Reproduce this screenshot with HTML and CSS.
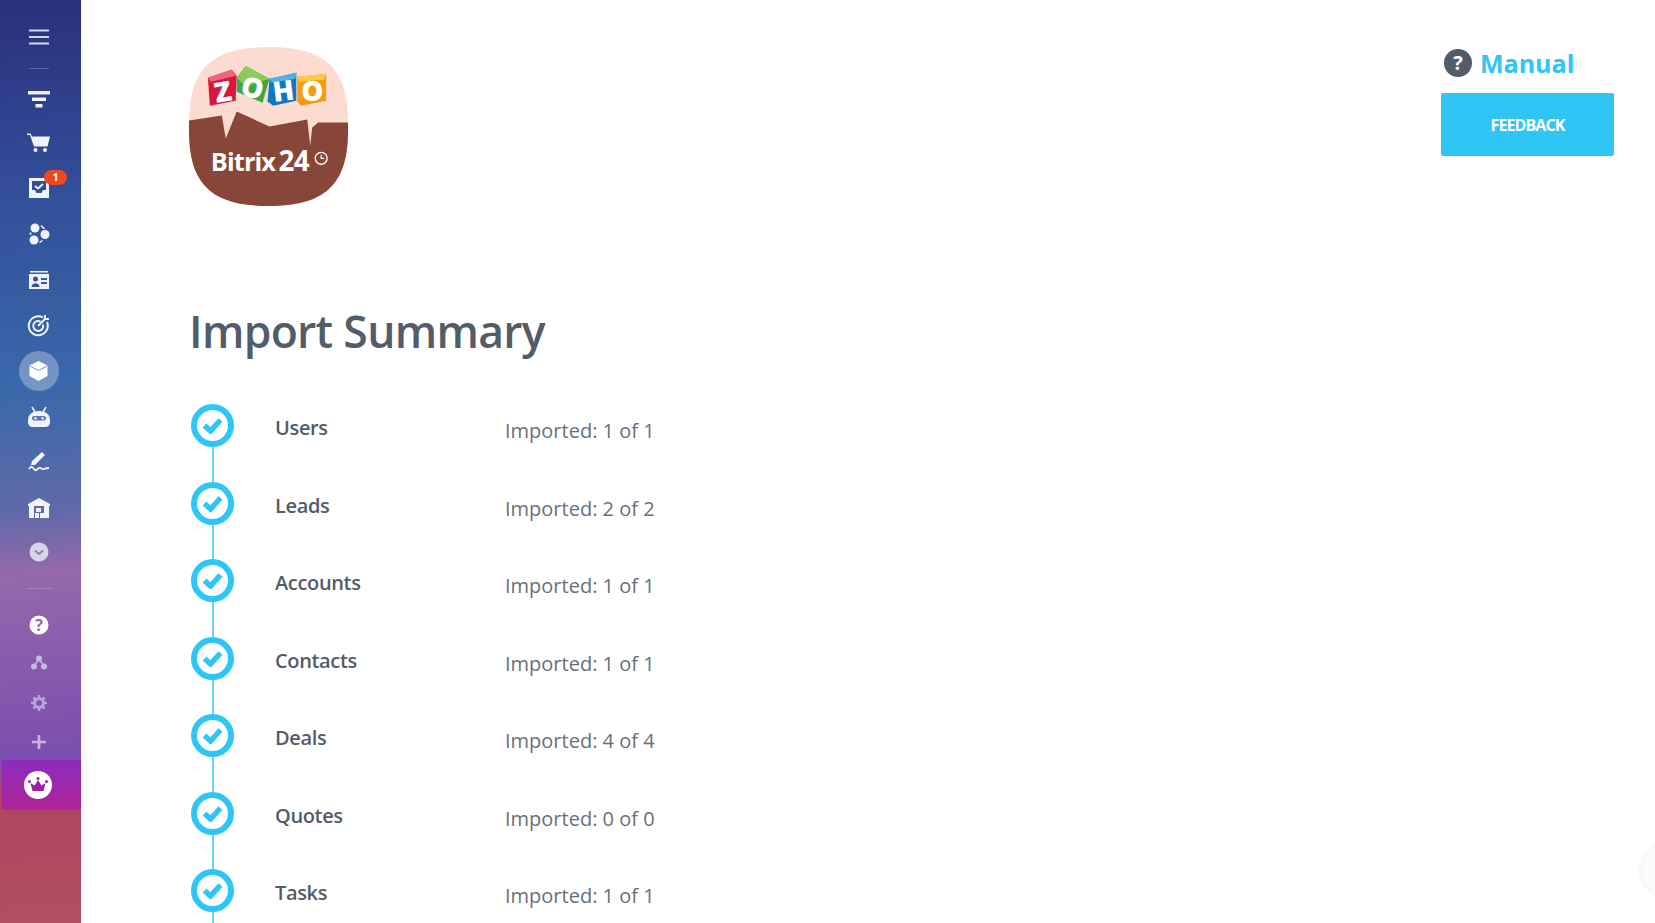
FILE: index.html
```html
<!DOCTYPE html>
<html lang="en">
<head>
<meta charset="utf-8">
<title>Import Summary</title>
<link rel="stylesheet" href="styles.css">
</head>
<body>
<div class="app">
  <nav class="sidebar">
    <div class="nav-top">
      <div class="nav-item menu"><svg width="20" height="16" viewBox="0 0 20 16"><path d="M0 1.500h20M0 8h20M0 14.500h20" stroke="#d5d9ec" stroke-width="2.200"/></svg></div>
      <div class="sep"></div>
      <div class="nav-list">
        <div class="nav-item"><svg width="22" height="18" viewBox="0 0 22 18"><path d="M0 1h22v3.500H0zM4 7.500h14v3.500H4zM7.500 14h7v3.500h-7z" fill="#f1f3fb"/></svg></div>
        <div class="nav-item"><svg width="24" height="20" viewBox="0 1.500 24 20"><path d="M0 1h3.500l1.500 3h18l-2.500 10H7L3 2.500H0z" fill="#f1f3fb"/><circle cx="8.500" cy="17.500" r="2" fill="#f1f3fb"/><circle cx="18" cy="17.500" r="2" fill="#f1f3fb"/></svg></div>
        <div class="nav-item"><svg width="20" height="20" viewBox="0 2 20 20"><path fill-rule="evenodd" d="M0 0h20v20H0zM3 3v9h3l1.500 3h5l1.500-3h3V3z" fill="#f1f3fb"/><path d="M6 8l3 2.500 5-4.500" stroke="#f1f3fb" stroke-width="2" fill="none"/></svg><span class="badge">1</span></div>
        <div class="nav-item"><svg width="22" height="22" viewBox="0 1 22 22"><circle cx="7" cy="5" r="4.500" fill="#f1f3fb"/><circle cx="17" cy="11.500" r="4.500" fill="#f1f3fb"/><circle cx="6" cy="17" r="4.500" fill="#f1f3fb"/><path d="M13 2.500l3.500 3.500M14.500 17.500l-3 2M2.500 9.500v2.500" stroke="#f1f3fb" stroke-width="1.500" fill="none"/></svg></div>
        <div class="nav-item"><svg width="20" height="18" viewBox="0 0 20 18"><path d="M1 0h18v1.500H1z" fill="#f1f3fb"/><path fill-rule="evenodd" d="M0 3h20v15H0zM12 7v2h6V7zM12 11v2h6v-2z" fill="#f1f3fb"/><circle cx="6.500" cy="8" r="2.500" fill="#34559b"/><path d="M2.500 16c0-5 8-5 8 0z" fill="#34559b"/></svg></div>
        <div class="nav-item"><svg width="22" height="22" viewBox="0 0 22 22" fill="none" stroke="#f1f3fb" stroke-width="2"><path d="M15 3.500A9.500 9.500 0 1 0 19 8"/><path d="M12.500 7.500A5 5 0 1 0 15 10.500"/><path d="M10 12L18 4"/><path d="M17 1v4h4"/></svg></div>
        <div class="nav-item"><span class="active-bg"><svg width="19" height="20" viewBox="0 0 19 20"><path d="M9.500 0l9 4.500v10.500l-9 5-9-5V4.500z" fill="#fff"/><path d="M1 5l8.500 4.500L18 5" stroke="#7b95c0" stroke-width="1" fill="none"/></svg></span></div>
        <div class="nav-item"><svg width="22" height="20" viewBox="0 -1 22 20"><path d="M4 0l3 5M18 0l-3 5" stroke="#f1f3fb" stroke-width="1.500" fill="none"/><path fill-rule="evenodd" d="M0 13c0-6 5-9 11-9s11 3 11 9v2c0 3-2 5-5 5H5c-3 0-5-2-5-5z" fill="#f1f3fb"/><rect x="4" y="9" width="14" height="4.500" rx="2.200" fill="#6273ad"/><circle cx="7.500" cy="11.200" r="1.200" fill="#f1f3fb"/><circle cx="14.500" cy="11.200" r="1.200" fill="#f1f3fb"/></svg></div>
        <div class="nav-item"><svg width="22" height="20" viewBox="0 -1 22 20"><path d="M14 0l3 3L7 13H3l1-4z" fill="#f1f3fb"/><path d="M1 17c2-3 3-3 5 0s3 0 5-1 3 2 5 1 3-1 5-1" stroke="#f1f3fb" stroke-width="1.800" fill="none"/></svg></div>
        <div class="nav-item"><svg width="22" height="20" viewBox="0 -1 22 20"><path fill-rule="evenodd" d="M11 0L22 6v2h-1v12H1V8H0V6zM6 8v12h10V8z" fill="#f1f3fb"/><path d="M8 10h5v4H8zM7 15h4v5H7zM12 15h4v5h-4z" fill="#f1f3fb"/></svg></div>
        <div class="nav-item"><svg width="20" height="20" viewBox="0 0 20 20"><circle cx="10" cy="10" r="9.500" fill="#d6d5e8"/><path d="M6 8.500l4 3.500 4-3.500" stroke="#7a7fb0" stroke-width="1.800" fill="none"/></svg></div>
      </div>
      <div class="sep lower"></div>
      <div class="nav-list tools">
        <div class="nav-item"><svg width="20" height="20" viewBox="0 0 20 20"><circle cx="10" cy="10" r="9.500" fill="#fff"/><text x="10" y="15.500" class="q-mark" fill="#8e6aa8">?</text></svg></div>
        <div class="nav-item"><svg width="16" height="15" viewBox="0 1 16 15"><circle cx="8" cy="3.500" r="3" fill="#c9b8e2"/><circle cx="3" cy="11.500" r="3" fill="#c9b8e2"/><circle cx="13" cy="11.500" r="3" fill="#c9b8e2"/><path d="M8 4L3 11M8 4l5 7" stroke="#c9b8e2" stroke-width="1.500"/></svg></div>
        <div class="nav-item"><svg width="16" height="16" viewBox="0 0 16 16"><circle cx="8" cy="8" r="4.500" fill="none" stroke="#b9a6da" stroke-width="3"/><path d="M8 0v16M0 8h16M2.300 2.300l11.400 11.400M13.700 2.300L2.300 13.700" stroke="#b9a6da" stroke-width="2.400" stroke-dasharray="3 10"/></svg></div>
        <div class="nav-item"><svg width="14" height="14" viewBox="0 0 14 14"><path d="M7 0v14M0 7h14" stroke="#c7b5e2" stroke-width="2.600"/></svg></div>
      </div>
      <div class="upgrade"><svg width="28" height="28" viewBox="0 0 28 28"><circle cx="14" cy="14" r="14" fill="#fff"/><path d="M6.500 12l4 2.500L14 9l3.500 5.500 4-2.500-2 8h-11z" fill="#9c1fa6"/><circle cx="14" cy="7.500" r="1.500" fill="#9c1fa6"/><circle cx="5.500" cy="10.500" r="1.500" fill="#9c1fa6"/><circle cx="22.500" cy="10.500" r="1.500" fill="#9c1fa6"/></svg></div>
    </div>
  </nav>

  <main class="content">
    <header class="head">
      <svg class="logo" width="159" height="159" viewBox="0 0 160 160">
        <path d="M80 0C135 0 160 20 160 75v10c0 55-25 75-80 75S0 140 0 85V75C0 20 25 0 80 0z" fill="#fcdcd1"/>
        <path d="M0 74l33-5 4 23 11-27 33 15 38-7 3 26 2-18 6-5h30v9c0 55-25 75-80 75S0 140 0 85z" fill="#884638"/>
        <path d="M19 31l24-8 5 6-1 25-26 5z" fill="#d9163f"/>
        <path d="M19 31l24-8 5 6-26 6z" fill="#f0647a"/>
        <path d="M48 31l9-12 24 13-7 24-26-11z" fill="#3fa845"/>
        <path d="M48 31l9-12 24 13-24 8z" fill="#8acb5a"/>
        <path d="M81 32l27-6v28l-23 5-6-4z" fill="#1177c4"/>
        <path d="M81 32l27-6-1 6-24 4z" fill="#4fb3e8"/>
        <path d="M109 30l29-3v27l-25 5-4-4z" fill="#f59d0c"/>
        <path d="M109 30l29-3-2 6-25 2z" fill="#ffc94a"/>
        <text x="34" y="55" class="cube-letter" transform="rotate(-10 34 45)">Z</text>
        <text x="64" y="51" class="cube-letter" transform="rotate(15 64 41)">O</text>
        <text x="95" y="54" class="cube-letter" transform="rotate(-7 95 44)">H</text>
        <text x="124" y="54" class="cube-letter">O</text>
        <text x="22" y="125" class="bitrix">Bitrix</text>
        <text x="90" y="125" class="bitrix-num">24</text>
        <circle cx="133" cy="112" r="6" fill="none" stroke="#fff" stroke-width="1.300"/>
        <path d="M133 108.500V112h3" fill="none" stroke="#fff" stroke-width="1.200"/>
      </svg>
      <div class="help">
        <a class="manual"><svg class="manual-icon" width="28" height="28" viewBox="0 0 28 28"><circle cx="14" cy="14" r="14" fill="#535c69"/><text x="14" y="21" class="manual-q">?</text></svg><span>Manual</span></a>
        <button class="feedback">FEEDBACK</button>
      </div>
    </header>

    <h1 class="title">Import Summary</h1>

    <ul class="steps">
      <li class="step"><span class="dot"><svg width="21" height="17" viewBox="0 0 21 17"><path d="M2.500 8.500l6 5.500L18.500 3" fill="none" stroke="#2fc6f6" stroke-width="5.500"/></svg></span><span class="name">Users</span><span class="count">Imported: 1 of 1</span></li>
      <li class="step"><span class="dot"><svg width="21" height="17" viewBox="0 0 21 17"><path d="M2.500 8.500l6 5.500L18.500 3" fill="none" stroke="#2fc6f6" stroke-width="5.500"/></svg></span><span class="name">Leads</span><span class="count">Imported: 2 of 2</span></li>
      <li class="step"><span class="dot"><svg width="21" height="17" viewBox="0 0 21 17"><path d="M2.500 8.500l6 5.500L18.500 3" fill="none" stroke="#2fc6f6" stroke-width="5.500"/></svg></span><span class="name">Accounts</span><span class="count">Imported: 1 of 1</span></li>
      <li class="step"><span class="dot"><svg width="21" height="17" viewBox="0 0 21 17"><path d="M2.500 8.500l6 5.500L18.500 3" fill="none" stroke="#2fc6f6" stroke-width="5.500"/></svg></span><span class="name">Contacts</span><span class="count">Imported: 1 of 1</span></li>
      <li class="step"><span class="dot"><svg width="21" height="17" viewBox="0 0 21 17"><path d="M2.500 8.500l6 5.500L18.500 3" fill="none" stroke="#2fc6f6" stroke-width="5.500"/></svg></span><span class="name">Deals</span><span class="count">Imported: 4 of 4</span></li>
      <li class="step"><span class="dot"><svg width="21" height="17" viewBox="0 0 21 17"><path d="M2.500 8.500l6 5.500L18.500 3" fill="none" stroke="#2fc6f6" stroke-width="5.500"/></svg></span><span class="name">Quotes</span><span class="count">Imported: 0 of 0</span></li>
      <li class="step"><span class="dot"><svg width="21" height="17" viewBox="0 0 21 17"><path d="M2.500 8.500l6 5.500L18.500 3" fill="none" stroke="#2fc6f6" stroke-width="5.500"/></svg></span><span class="name">Tasks</span><span class="count">Imported: 1 of 1</span></li>
    </ul>
  </main>
  <div class="chat-edge"></div>
</div>
</body>
</html>
```

FILE: styles.css
```css
* { box-sizing: border-box; }
html, body { margin: 0; height: 100%; overflow: hidden; background: #fff; }
body { font-family: "Open Sans", "Liberation Sans", sans-serif; color: #535c69; }
.app { display: flex; height: 923px; width: 1655px; overflow: hidden; position: relative; }

.sidebar {
  width: 81px; flex: none; height: 100%;
  background: linear-gradient(176deg, #2a2f7c 0%, #33509a 22%, #3a68aa 42%, #5e6aa8 55%, #9468ab 62%, #7a4ead 82%, #b1445f 86%, #b0505f 100%);
}
.nav-top { display: flex; flex-direction: column; align-items: stretch; padding-top: 21px; }
.nav-item { height: 32px; display: flex; align-items: center; justify-content: center; position: relative; padding-right: 4px; }
.nav-item svg { overflow: visible; }
.sep { height: 1px; width: 20px; margin: 15px 32px 14px auto; background: rgba(255,255,255,.22); }
.sep.lower { width: 26px; margin: 20px 29px 20px auto; background: rgba(255,255,255,.2); }
.nav-list { display: flex; flex-direction: column; gap: 13.300px; }
.tools { gap: 7px; margin-bottom: 2px; }
.badge {
  position: absolute; left: 44px; top: -4px; width: 23px; height: 15px; border-radius: 8px;
  background: #f0481f; color: #fff; font: 700 10px/15px "Open Sans", sans-serif; text-align: center;
}
.active-bg { width: 40px; height: 40px; border-radius: 50%; background: rgba(255,255,255,.3); display: flex; align-items: center; justify-content: center; flex: none; }
.q-mark { font: 700 16px "Open Sans", sans-serif; text-anchor: middle; }
.upgrade {
  margin-left: 2px; height: 50px; display: flex; align-items: center; justify-content: center;
  background: linear-gradient(180deg, #8a2dbd 0%, #b12399 100%); padding-right: 8px;
}

.content { flex: 1; padding: 46px 41px 0 108px; min-width: 0; }
.head { display: flex; justify-content: space-between; align-items: flex-start; }
.logo { display: block; margin-top: 1px; }
.cube-letter { font: 800 28px "Open Sans", sans-serif; fill: #fff; text-anchor: middle; }
.bitrix { font: 700 25.500px "Open Sans", sans-serif; fill: #fff; letter-spacing: -.9px; }
.bitrix-num { font: 700 28px "Open Sans", sans-serif; fill: #fff; letter-spacing: -.6px; }
.help { display: flex; flex-direction: column; align-items: flex-start; width: 173px; }
.manual { display: flex; align-items: center; gap: 8px; margin: 1px 0 0 3px; height: 32px; color: #2fc6f6; font-size: 25px; font-weight: 700; line-height: 32px; }
.manual-icon { flex: none; overflow: visible; }
.manual-q { font: 700 20px "Open Sans", sans-serif; fill: #fff; text-anchor: middle; }
.feedback {
  margin-top: 14px; width: 173px; height: 63px; border: 0; border-radius: 2px; background: #2fc6f6; color: #fff;
  font: 700 16px "Open Sans", sans-serif; letter-spacing: -.9px; padding: 0;
}

.title { margin: 95px 0 0; font-size: 44.500px; font-weight: 600; line-height: 60px; color: #535c69; letter-spacing: -.7px; }

.steps { list-style: none; margin: 43px 0 0 2px; padding: 0; }
.step { display: flex; align-items: flex-start; height: 77.500px; position: relative; }
.step::after { content: ""; position: absolute; left: 20.500px; top: 43px; width: 2px; height: 35px; background: #6cd3f5; }
.dot { flex: none; width: 43px; height: 43px; border: 6px solid #2fc6f6; border-radius: 50%; display: flex; align-items: center; justify-content: center; }
.dot svg { width: 21px; height: 17px; flex: none; }
.name { width: 230px; margin-left: 41px; margin-top: 10px; font-size: 20px; line-height: 28px; letter-spacing: -.35px; font-weight: 600; }
.count { margin-top: 13px; font-size: 20px; line-height: 28px; color: #6a7079; font-weight: 400; }

.chat-edge { position: absolute; left: 1642px; top: 845px; width: 50px; height: 50px; border-radius: 50%; background: #fbfbfb; box-shadow: 0 0 6px rgba(0,0,0,.1); }
```
